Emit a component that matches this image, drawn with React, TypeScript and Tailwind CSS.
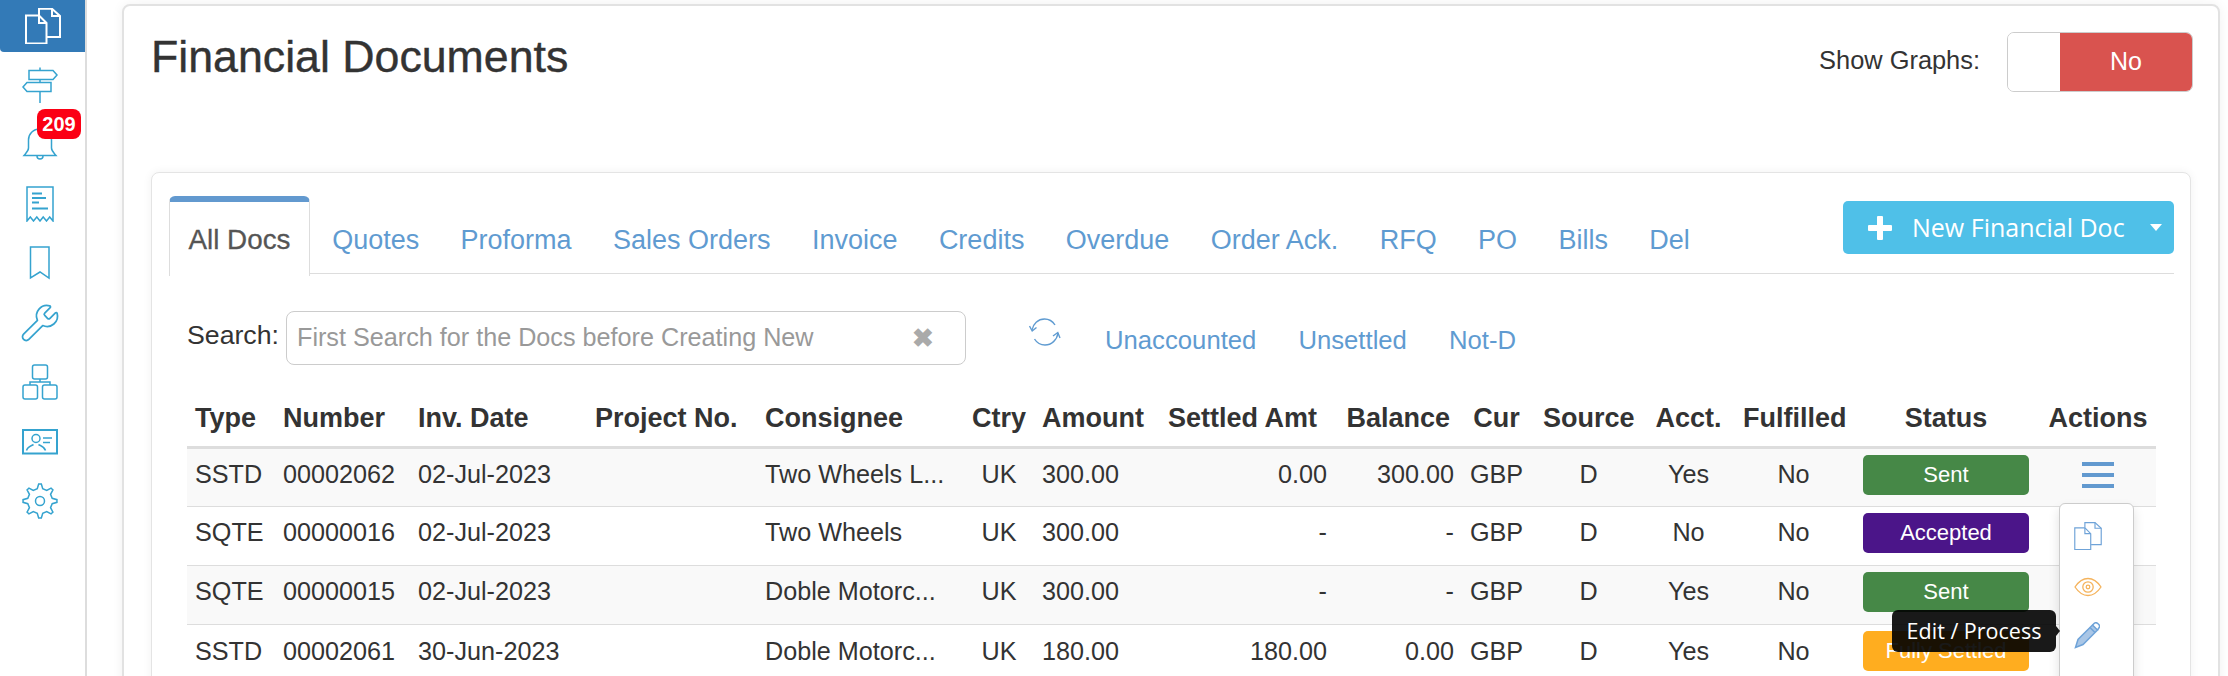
import React from "react";
import { Wrench } from "lucide-react";

const SANS = "font-['Liberation_Sans',Arial,sans-serif]";
const OPEN = "font-['Open_Sans',sans-serif]";

function Copy({ size = 36, sw = 1.6 }: { size?: number; sw?: number }) {
  return (
    <svg width={size} height={size} viewBox="0 0 36 36" fill="none" stroke="currentColor" strokeWidth={sw}>
      <path d="M1 7.5H14L21.5 15V35.5H1Z" />
      <path d="M14 7.5V15H21.5" />
      <path d="M14 7V.8H27L35 8V29H22" />
      <path d="M27 .8V8H35" />
    </svg>
  );
}

const Ic = ({ children }: { children: React.ReactNode }) => (
  <svg width={36} height={36} viewBox="0 0 36 36" fill="none" stroke="currentColor" strokeWidth={1.5}>
    {children}
  </svg>
);

function gearPath() {
  const c = 18;
  const pts: string[] = [];
  const n = 8;
  for (let i = 0; i < n; i++) {
    const a = (i * 2 * Math.PI) / n - Math.PI / 2;
    const step = (2 * Math.PI) / n;
    const add = (r: number, o: number) => {
      pts.push(`${(c + r * Math.cos(a + o)).toFixed(2)} ${(c + r * Math.sin(a + o)).toFixed(2)}`);
    };
    add(17, -step * 0.1);
    add(17, step * 0.1);
    add(12.5, step * 0.28);
    add(12.5, step * 0.72);
  }
  return "M" + pts.join("L") + "Z";
}

type Row = {
  type: string; num: string; date: string; cons: string; amt: string; settled: string; bal: string;
  acct: string; status: string; color: string;
};
const rows: Row[] = [
  { type: "SSTD", num: "00002062", date: "02-Jul-2023", cons: "Two Wheels L...", amt: "300.00", settled: "0.00", bal: "300.00", acct: "Yes", status: "Sent", color: "bg-[#468847]" },
  { type: "SQTE", num: "00000016", date: "02-Jul-2023", cons: "Two Wheels", amt: "300.00", settled: "-", bal: "-", acct: "No", status: "Accepted", color: "bg-[#4b1589]" },
  { type: "SQTE", num: "00000015", date: "02-Jul-2023", cons: "Doble Motorc...", amt: "300.00", settled: "-", bal: "-", acct: "Yes", status: "Sent", color: "bg-[#468847]" },
  { type: "SSTD", num: "00002061", date: "30-Jun-2023", cons: "Doble Motorc...", amt: "180.00", settled: "180.00", bal: "0.00", acct: "Yes", status: "Fully Settled", color: "bg-[#ffad1f]" },
];

const tabs = ["Quotes", "Proforma", "Sales Orders", "Invoice", "Credits", "Overdue", "Order Ack.", "RFQ", "PO", "Bills", "Del"];
const widths = [88, 135, 177, 170, 207, 70, 123, 172, 129, 77, 107, 93, 117, 188, 116];

const thBase = "pl-[8px] font-bold text-[27px] leading-none whitespace-nowrap border-b-[3px] border-[#ddd] h-[59px] pt-[4px]";
const th = `${thBase} pr-[8px]`;
const tdBase = "pl-[8px] pb-[5px] text-[25.2px] leading-none whitespace-nowrap h-[59px] border-t border-[#ddd]";
const td = `${tdBase} pr-[8px]`;

export default function App() {
  return (
    <div className={`${SANS} relative flex h-[676px] w-[2228px] overflow-hidden bg-white text-[#333]`}>
      {/* sidebar */}
      <div className="w-[87px] shrink-0 border-r-2 border-[#ddd] text-[#35a3cf]">
        <div className="flex h-[52px] items-center justify-center rounded-bl-[4px] bg-[#337ab7] text-white">
          <Copy sw={2} />
        </div>
        <div className="flex flex-col items-center pt-[3px] pr-[5px]">
          <div className="flex h-[59.5px] items-center justify-center">
            <Ic>
              <path d="M7 3.5H31L35 8L31 12.5H7Z" />
              <path d="M29 15.5H5L1 20L5 24.5H29Z" />
              <path d="M18 .5V3.5M18 12.5V15.5M18 24.5V36" />
            </Ic>
          </div>
          <div className="flex h-[59.5px] items-center justify-center">
            <Ic>
              <path d="M18 3C11 3 6.5 8 6.5 14V22C6.5 25 4 27 2 29.5H34C32 27 29.5 25 29.5 22V14C29.5 8 25 3 18 3Z" />
              <path d="M15 30a3 3 0 0 0 6 0" />
            </Ic>
          </div>
          <div className="flex h-[59.5px] items-center justify-center">
            <Ic>
              <path d="M5 1H31V35L27.7 31L24.5 35L21.2 31L18 35L14.8 31L11.5 35L8.3 31L5 35Z" />
              <path d="M10 7.5H20M10 12H24M10 16.5H17M10 22.5H26" strokeWidth={2} />
            </Ic>
          </div>
          <div className="flex h-[59.5px] items-center justify-center">
            <Ic>
              <path d="M8.5 2H27V33L18 27L8.5 33Z" />
            </Ic>
          </div>
          <div className="flex h-[59.5px] items-center justify-center">
            <Wrench size={42} strokeWidth={1} />
          </div>
          <div className="flex h-[59.5px] items-center justify-center">
            <Ic>
              <rect x="10.5" y="1" width="15" height="14" rx="2" />
              <rect x="1" y="21" width="14.5" height="14" rx="2" />
              <rect x="20.5" y="21" width="14.5" height="14" rx="2" />
              <path d="M18 15V18M8 21V18H28V21" />
            </Ic>
          </div>
          <div className="flex h-[59.5px] items-center justify-center">
            <Ic>
              <rect x="1" y="6" width="34" height="23.5" strokeWidth={2} />
              <circle cx="14" cy="14.5" r="4" />
              <path d="M4.5 26.5C5.5 22.5 9 22 11.5 20.5M23.5 26.5C22.5 22.5 19 22 16.5 20.5" />
              <path d="M21 14H30M21 18.5H28" />
            </Ic>
          </div>
          <div className="flex h-[59.5px] items-center justify-center">
            <Ic>
              <path d={gearPath()} />
              <circle cx="18" cy="18" r="4.5" />
            </Ic>
          </div>
        </div>
      </div>

      {/* main */}
      <div className="min-w-0 flex-1 pt-[4px] pr-[8px] pl-[35px]">
        <div className="h-[720px] rounded-[8px] border-2 border-[#e2e2e2] bg-white px-[27px] shadow-[0_0_12px_rgba(0,0,0,0.06)]">
          <div className="flex h-[166px] items-start justify-between pt-[27px]">
            <h1 className="text-[44.7px] leading-[48px] font-normal [-webkit-text-stroke:0.4px_#333]">Financial Documents</h1>
            <div className="mt-[-3px] mr-[-2px] flex items-center pt-[2px]">
              <span className="mr-[27px] mb-[2px] text-[25.4px] leading-none">Show Graphs:</span>
              <div className="flex h-[60px] w-[186px] overflow-hidden rounded-[7px] border border-[#ccc]">
                <div className="w-[52px] bg-white" />
                <div className="flex flex-1 items-center justify-center bg-[#d9534f] text-[25px] text-white">No</div>
              </div>
            </div>
          </div>

          <div className="h-[520px] rounded-[8px] border border-[#e4e4e4] bg-white px-[17px] pt-[23px] shadow-[0_0_10px_rgba(0,0,0,0.06)]">
            {/* tabs */}
            <div className="mr-[-1px] flex h-[78px] justify-between border-b border-[#ddd]">
              <div className="flex">
                <div className="mr-[1.5px] h-[80px] rounded-t-[6px] border-x border-t-[6px] border-x-[#ddd] border-t-[#6299cf] bg-white px-[18.5px] pt-[22px] text-[27.8px] leading-[32px] text-[#555] [-webkit-text-stroke:0.3px_#555]">
                  All Docs
                </div>
                {tabs.map((t) => (
                  <div key={t} className="px-[20.7px] pt-[28px] text-[27px] leading-[32px] text-[#5f9bd1]">
                    {t}
                  </div>
                ))}
              </div>
              <div className={`${OPEN} mt-[5px] flex h-[53px] w-[331px] items-center rounded-[5px] bg-[#4fc0e8] pl-[24px] text-[25px] text-white`}>
                <svg width="26" height="26" viewBox="0 0 26 26" fill="#fff" className="mr-[19px]">
                  <path d="M10 2a1 1 0 0 1 1-1h4a1 1 0 0 1 1 1v8h8a1 1 0 0 1 1 1v4a1 1 0 0 1-1 1h-8v8a1 1 0 0 1-1 1h-4a1 1 0 0 1-1-1v-8H2a1 1 0 0 1-1-1v-4a1 1 0 0 1 1-1h8Z" />
                </svg>
                <span className="whitespace-nowrap">New Financial Doc</span>
                <span className="ml-[25px] h-0 w-0 border-x-[6.5px] border-t-[7px] border-x-transparent border-t-white" />
              </div>
            </div>

            {/* search */}
            <div className="mt-[37px] flex h-[53px] items-center pl-[18px]">
              <span className="mb-[4px] w-[99px] text-[26.7px] leading-none">Search:</span>
              <div className="flex h-[54px] w-[680px] items-center justify-between rounded-[8px] border border-[#ccc] pr-[31px] pl-[10px]">
                <span className="text-[25.2px] whitespace-nowrap text-[#999]">First Search for the Docs before Creating New</span>
                <span className="text-[26px] leading-none font-bold text-[#aaa]">✖</span>
              </div>
              <svg width="32" height="30" viewBox="0 0 32 30" fill="none" stroke="#5f9bd1" strokeWidth="1.4" className="mt-[-12px] ml-[63px]">
                <path d="M3 13C4 7 9 2 15.5 2C20 2 23.5 4 26 8" />
                <path d="M29 16C28 23 22.5 28 16 28C11.5 28 8 26 5.5 22" />
                <path d="M.5 9L3.2 14L7.5 10.5M31 21L28.8 15.5L24 19" />
              </svg>
              <div className="mt-[6px] ml-[44px] flex gap-[42px] text-[25.7px] leading-none whitespace-nowrap text-[#5f9bd1]">
                <span>Unaccounted</span>
                <span>Unsettled</span>
                <span>Not-D</span>
              </div>
            </div>

            {/* table */}
            <table className="mt-[24px] ml-[18px] w-[1969px] table-fixed border-collapse">
              <colgroup>
                {widths.map((w, i) => (
                  <col key={i} style={{ width: w }} />
                ))}
              </colgroup>
              <thead>
                <tr>
                  <th className={`${th} text-left`}>Type</th>
                  <th className={`${th} text-left`}>Number</th>
                  <th className={`${th} text-left`}>Inv. Date</th>
                  <th className={`${th} text-left`}>Project No.</th>
                  <th className={`${th} text-left`}>Consignee</th>
                  <th className={`${th} text-center`}>Ctry</th>
                  <th className={`${th} text-left`}>Amount</th>
                  <th className={`${thBase} pr-[12px] text-right`}>Settled Amt</th>
                  <th className={`${th} text-right`}>Balance</th>
                  <th className={`${th} text-center`}>Cur</th>
                  <th className={`${th} text-center`}>Source</th>
                  <th className={`${th} text-center`}>Acct.</th>
                  <th className={`${th} text-center`}>Fulfilled</th>
                  <th className={`${th} text-center`}>Status</th>
                  <th className={`${th} text-center`}>Actions</th>
                </tr>
              </thead>
              <tbody>
                {rows.map((r, i) => (
                  <tr key={i} className={i % 2 === 0 ? "bg-[#f9f9f9]" : "bg-white"}>
                    <td className={td}>{r.type}</td>
                    <td className={td}>{r.num}</td>
                    <td className={td}>{r.date}</td>
                    <td className={td}></td>
                    <td className={td}>{r.cons}</td>
                    <td className={`${td} text-center`}>UK</td>
                    <td className={td}>{r.amt}</td>
                    <td className={`${tdBase} pr-[2px] text-right`}>{r.settled}</td>
                    <td className={`${tdBase} pr-[4px] text-right`}>{r.bal}</td>
                    <td className={`${td} text-center`}>GBP</td>
                    <td className={`${td} text-center`}>D</td>
                    <td className={`${td} text-center`}>{r.acct}</td>
                    <td className={`${td} text-center`}>No</td>
                    <td className={`${td} text-center`}>
                      <div className={`mx-auto flex h-[40px] w-[166px] items-center justify-center rounded-[5px] text-[22px] text-white ${r.color}`}>
                        {r.status}
                      </div>
                    </td>
                    <td className={td}>
                      {i === 0 && (
                        <div className="mx-auto flex h-[26px] w-[32px] flex-col justify-between">
                          <span className="h-[4px] bg-[#6299cf]" />
                          <span className="h-[4px] bg-[#6299cf]" />
                          <span className="h-[4px] bg-[#6299cf]" />
                        </div>
                      )}
                    </td>
                  </tr>
                ))}
              </tbody>
            </table>
          </div>
        </div>
      </div>

      {/* notification badge */}
      <div className="absolute top-[109px] left-[37px] flex h-[30px] w-[44px] items-center justify-center rounded-[8px] bg-[#fb0014] text-[20px] leading-none font-bold text-white">
        209
      </div>

      {/* actions dropdown */}
      <div className="absolute top-[503px] left-[2059px] flex h-[190px] w-[75px] flex-col rounded-[6px] border border-[#ccc] bg-white pl-[14px] shadow-[0_6px_12px_rgba(0,0,0,0.12)]">
        <div className="mt-[18px] text-[#6fa3d8]">
          <Copy size={28} sw={1.5} />
        </div>
        <svg width="28" height="20" viewBox="0 0 28 20" fill="none" stroke="#f5b35c" strokeWidth="1.3" className="mt-[27px]">
          <path d="M1 10C5 4 9 1.5 14 1.5S23 4 27 10C23 16 19 18.5 14 18.5S5 16 1 10Z" />
          <circle cx="14" cy="10" r="5.2" />
          <circle cx="14" cy="10" r="1.8" />
        </svg>
        <svg width="26" height="27" viewBox="0 0 26 27" fill="none" stroke="#6fa3d8" strokeWidth="1.5" className="mt-[25px]">
          <path d="M1.5 25.5L4 17.5L18.5 3L23.5 8L9 22.5Z" fill="#a9c6e6" />
          <path d="M18.5 3L20.5 1.2C21.5.5 22.5.5 23.5 1.3L25 2.8C25.8 3.8 25.8 4.8 25 5.8L23.5 8" />
          <path d="M16 5.5L21 10.5" />
        </svg>
      </div>

      {/* tooltip */}
      <div className={`${OPEN} absolute top-[610px] left-[1892px] flex h-[42px] w-[164px] items-center justify-center rounded-[6px] bg-[rgba(0,0,0,0.9)] text-[21.5px] whitespace-nowrap text-white`}>
        Edit / Process
        <span className="absolute top-[16px] right-[-4px] h-0 w-0 border-y-[5px] border-l-[4px] border-y-transparent border-l-[rgba(0,0,0,0.9)]" />
      </div>
    </div>
  );
}
